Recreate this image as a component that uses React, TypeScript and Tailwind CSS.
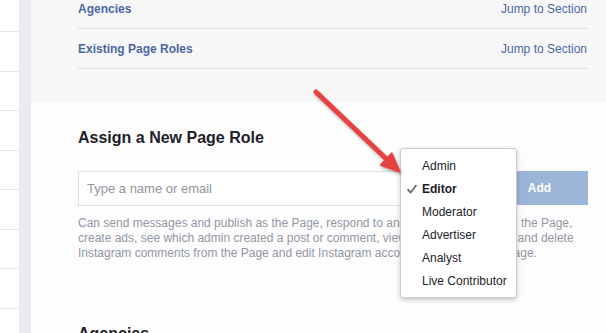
import React from "react";

const roles = ["Admin", "Editor", "Moderator", "Advertiser", "Analyst", "Live Contributor"];

function Check() {
  return (
    <svg width="10" height="10" viewBox="0 0 10 10" className="absolute left-[6px] top-[7px]">
      <path d="M1 5.6 L3.7 8.6 L9 1.6" fill="none" stroke="#606770" strokeWidth="1.7" strokeLinecap="round" strokeLinejoin="round" />
    </svg>
  );
}

function RoleMenu() {
  return (
    <div className="absolute left-[322px] top-[-23px] z-10 w-[117px] rounded-[3px] border border-[#c9ccd1] bg-white py-[5px] shadow-[0_2px_5px_rgba(0,0,0,0.22)]">
      {roles.map((r) => (
        <div key={r} className="relative flex h-[23px] items-center pl-[21px] text-[12px] text-[#1d2129]">
          {r === "Editor" && <Check />}
          <span className={r === "Editor" ? "font-bold" : ""}>{r}</span>
        </div>
      ))}
    </div>
  );
}

function Arrow() {
  return (
    <svg
      width="606"
      height="333"
      viewBox="0 0 606 333"
      className="pointer-events-none absolute left-0 top-0 z-20 drop-shadow-[1px_2px_1.5px_rgba(0,0,0,0.3)]"
    >
      <line x1="316" y1="92" x2="388" y2="160.5" stroke="#e8413f" strokeWidth="5" strokeLinecap="round" />
      <polygon points="400,172 380.5,165 391.8,153" fill="#e8413f" stroke="#e8413f" strokeWidth="1.5" strokeLinejoin="round" />
    </svg>
  );
}

export default function App() {
  const sideRows = [0, 1, 2, 3, 4, 5, 6, 7];
  return (
    <div className="relative flex h-[333px] w-[606px] overflow-hidden bg-white font-['Liberation_Sans',Arial,sans-serif]">
      {/* left nav */}
      <div className="flex w-[19px] flex-col bg-white">
        <div className="h-[32px] shrink-0 border-b border-[#e7e8ea]" />
        {sideRows.map((i) => (
          <div key={i} className="h-[39.5px] shrink-0 border-b border-[#e7e8ea]" />
        ))}
      </div>
      <div className="w-[12px] shrink-0 bg-[#e9ebee]" />

      {/* main */}
      <div className="flex flex-1 flex-col bg-[#fdfdfd]">
        <div className="bg-[#f7f7f7] pb-[33px] pl-[47px] pr-[18px]">
          <div className="-mt-[11px]">
            {["Agencies", "Existing Page Roles"].map((s) => (
              <div key={s} className="flex h-[40px] items-center justify-between border-b border-[#dddfe2] text-[12px] text-[#4b67a1]">
                <span className="font-bold">{s}</span>
                <span className="pr-px">Jump to Section</span>
              </div>
            ))}
          </div>
        </div>

        <div className="pl-[47px] pr-[18px]">
          <h2 className="mt-[26px] text-[16px] font-bold leading-[20px] text-[#1d2129]">Assign a New Page Role</h2>

          <div className="relative mt-[23px] flex gap-[12px]">
            <div className="flex h-[35px] flex-1 items-center border border-[#dddfe2] bg-white pl-[8px] text-[13px] text-[#90949c]">
              Type a name or email
            </div>
            <div className="flex h-[34px] w-[95px] items-center justify-center bg-[#9cb4d8] pr-[2px] text-[12px] font-bold text-white">
              Add
            </div>
            <RoleMenu />
          </div>

          <p className="mt-[10px] text-[12px] leading-[15px] text-[#9197a3]">
            Can send messages and publish as the Page, respond to and delete comments on the Page, create ads, see which admin
            created a post or comment, view insights, respond to and delete Instagram comments from the Page and edit Instagram
            account details from the Page.
          </p>

          <h2 className="mt-[63px] text-[16px] font-bold leading-[20px] text-[#1d2129]">Agencies</h2>
        </div>
      </div>

      <Arrow />
    </div>
  );
}
